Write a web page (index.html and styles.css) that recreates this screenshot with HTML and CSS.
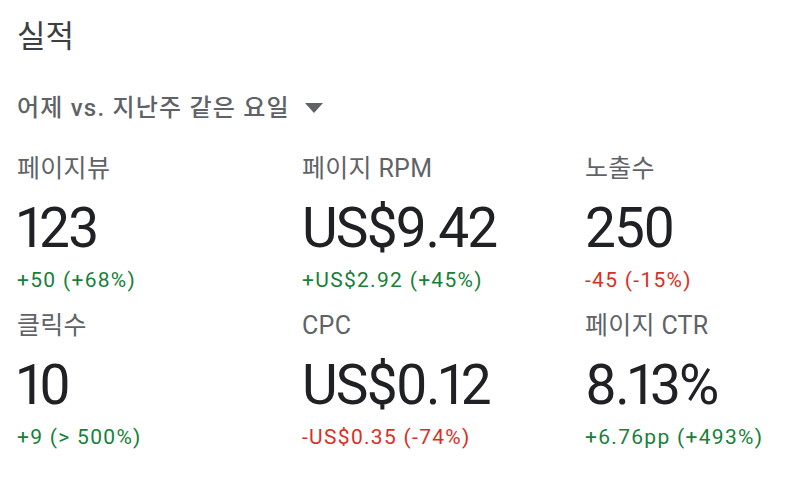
FILE: index.html
```html
<!DOCTYPE html>
<html lang="ko">
<head>
<meta charset="utf-8">
<link rel="stylesheet" href="styles.css">
</head>
<body>
<div class="card">
  <h1 class="title">실적</h1>
  <div class="range">
    <span>어제 vs. 지난주 같은 요일</span>
    <svg class="caret" width="18" height="10" viewBox="0 0 18 10"><path d="M0 0 L18 0 L9 10 Z" fill="#5f6368"/></svg>
  </div>
  <div class="grid">
    <div class="metric">
      <div class="label">페이지뷰</div>
      <div class="value">123</div>
      <div class="delta up">+50 (+68%)</div>
    </div>
    <div class="metric">
      <div class="label">페이지 RPM</div>
      <div class="value">US$9.42</div>
      <div class="delta up">+US$2.92 (+45%)</div>
    </div>
    <div class="metric">
      <div class="label">노출수</div>
      <div class="value">250</div>
      <div class="delta down">-45 (-15%)</div>
    </div>
    <div class="metric">
      <div class="label">클릭수</div>
      <div class="value">10</div>
      <div class="delta up">+9 (&gt; 500%)</div>
    </div>
    <div class="metric">
      <div class="label">CPC</div>
      <div class="value">US$0.12</div>
      <div class="delta down">-US$0.35 (-74%)</div>
    </div>
    <div class="metric">
      <div class="label">페이지 CTR</div>
      <div class="value">8.13%</div>
      <div class="delta up">+6.76pp (+493%)</div>
    </div>
  </div>
</div>
</body>
</html>
```

FILE: styles.css
```css
html, body {
  margin: 0;
  padding: 0;
  background: #ffffff;
}
body {
  font-family: Roboto, "Noto Sans CJK KR", sans-serif;
  color: #202124;
}
.card {
  padding: 13px 0 0 17px;
}
.title {
  margin: 0;
  font-size: 31px;
  font-weight: 400;
  line-height: 48px;
  color: #3c4043;
}
.range {
  display: flex;
  align-items: center;
  gap: 15px;
  margin-top: 32px;
  font-size: 24px;
  font-weight: 500;
  letter-spacing: 1.2px;
  color: #5f6368;
  line-height: 30px;
}
.caret {
  display: block;
}
.grid {
  display: grid;
  grid-template-columns: 285px 283px 1fr;
  row-gap: 16px;
  margin-top: 30px;
}
.metric {
  display: flex;
  flex-direction: column;
}
.label {
  font-size: 25px;
  line-height: 32px;
  letter-spacing: 0.3px;
  color: #5f6368;
}
.value {
  font-size: 55px;
  line-height: 64px;
  letter-spacing: -1.8px;
  font-variant-numeric: proportional-nums;
  margin-top: 11px;
  color: #202124;
}
.delta {
  font-size: 21px;
  line-height: 28px;
  letter-spacing: 1.3px;
  margin-top: 6px;
}
.up { color: #188038; }
.down { color: #d93025; }
```
